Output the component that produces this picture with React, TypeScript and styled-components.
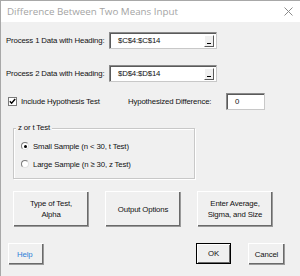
import React, { ReactElement, ReactNode } from 'react'
import styled, { createGlobalStyle } from 'styled-components'

const GlobalStyle = createGlobalStyle`
  html, body {
    margin: 0;
    padding: 0;
    background: #f0f0f0;
  }
`

const Window = styled.div(() => ({
  width: 300,
  height: 276,
  boxSizing: 'border-box',
  borderTop: '1px solid #a8a8a8',
  borderLeft: '1px solid #a8a8a8',
  background: '#f0f0f0',
  fontFamily: '"Liberation Sans", Arial, sans-serif',
  fontSize: 7.8,
  letterSpacing: -0.15,
  color: '#111',
  overflow: 'hidden',
}))

const TitleBar = styled.div(() => ({
  height: 21,
  background: '#ffffff',
  display: 'flex',
  alignItems: 'center',
  justifyContent: 'space-between',
  padding: '0 7px 0 6px',
  fontFamily: '"Open Sans", "Liberation Sans", sans-serif',
  fontSize: 9.8,
  letterSpacing: 0,
  color: '#a4a4a4',
}))

const Body = styled.div(() => ({
  padding: '0 0 0 5px',
}))

const Row = styled.div<{ $top: number }>(({ $top }) => ({
  display: 'flex',
  alignItems: 'center',
  marginTop: $top,
}))

const Label = styled.span<{ $width?: number }>(({ $width }) => ({
  width: $width,
  whiteSpace: 'nowrap',
}))

const TextBox = styled.div<{ $width: number }>(({ $width }) => ({
  width: $width,
  height: 17,
  boxSizing: 'border-box',
  background: '#fff',
  borderTop: '1px solid #8a8a8a',
  borderLeft: '1px solid #8a8a8a',
  borderRight: '1px solid #c8c8c8',
  borderBottom: '1px solid #c8c8c8',
  boxShadow: 'inset 1px 1px 0 #5a5a5a',
  display: 'flex',
  alignItems: 'center',
  paddingLeft: 8,
  paddingRight: 2,
}))

const BoxValue = styled.span(() => ({
  flex: 1,
}))

const PickButton = styled.div(() => ({
  width: 10,
  height: 12,
  boxSizing: 'border-box',
  background: '#f0f0f0',
  borderTop: '1px solid #fff',
  borderLeft: '1px solid #fff',
  borderRight: '1px solid #5a5a5a',
  borderBottom: '1px solid #5a5a5a',
  display: 'flex',
  alignItems: 'flex-end',
  justifyContent: 'center',
  paddingBottom: 2,
  '&::after': {
    content: '""',
    width: 4,
    height: 1,
    background: '#000',
  },
}))

const CheckBox = styled.span(() => ({
  width: 9,
  height: 9,
  boxSizing: 'border-box',
  background: '#fff',
  border: '1px solid #7a7a7a',
  display: 'inline-flex',
  alignItems: 'center',
  justifyContent: 'center',
  marginLeft: 2,
  marginRight: 4,
}))

const Frame = styled.div(() => ({
  width: 182,
  height: 51,
  boxSizing: 'border-box',
  margin: '18px 0 0 7px',
  padding: '0 0 0 7px',
  border: '1px solid #c8c8c8',
  boxShadow: '1px 1px 0 #fff, inset 1px 1px 0 #fff',
  display: 'flex',
  flexDirection: 'column',
  gap: 6,
}))

const Legend = styled.div(() => ({
  alignSelf: 'flex-start',
  margin: '-6px 0 1px -5px',
  padding: '0 2px',
  background: '#f0f0f0',
  lineHeight: '10px',
}))

const RadioRow = styled.div(() => ({
  display: 'flex',
  alignItems: 'center',
  gap: 4,
  height: 12,
}))

const Radio = styled.span<{ $on?: boolean }>(({ $on }) => ({
  width: 8,
  height: 8,
  boxSizing: 'border-box',
  borderRadius: '50%',
  background: '#fff',
  border: '1px solid',
  borderColor: '#7a7a7a #e0e0e0 #e0e0e0 #7a7a7a',
  display: 'inline-flex',
  alignItems: 'center',
  justifyContent: 'center',
  '&::after': {
    content: '""',
    width: 3,
    height: 3,
    borderRadius: '50%',
    background: $on ? '#000' : 'transparent',
  },
}))

const ButtonRow = styled.div<{ $top: number }>(({ $top }) => ({
  display: 'flex',
  alignItems: 'center',
  marginTop: $top,
}))

const Button = styled.div<{ $width: number; $height: number; $left: number; $default?: boolean; $link?: boolean }>(
  ({ $width, $height, $left, $default, $link }) => ({
    width: $width,
    height: $height,
    marginLeft: $left,
    boxSizing: 'border-box',
    background: '#f0f0f0',
    border: $default ? '1px solid #000' : 'none',
    borderTop: $default ? '1px solid #000' : '1px solid #fff',
    borderLeft: $default ? '1px solid #000' : '1px solid #fff',
    boxShadow: $default
      ? 'inset 1px 1px 0 #fff, inset -1px -1px 0 #6a6a6a'
      : 'inset -1px -1px 0 #6a6a6a, 1px 1px 0 #9a9a9a',
    display: 'flex',
    alignItems: 'center',
    justifyContent: $link ? 'flex-start' : 'center',
    paddingLeft: $link ? 8 : 0,
    textAlign: 'center',
    lineHeight: '11px',
    color: $link ? '#2f7fd8' : '#111',
  }),
)

const Close = (): ReactElement => (
  <svg width="9" height="9" viewBox="0 0 9 9">
    <path d="M0.5 0.5 L8.5 8.5 M8.5 0.5 L0.5 8.5" stroke="#8a8a8a" strokeWidth="1" />
  </svg>
)

const Check = (): ReactElement => (
  <svg width="7" height="7" viewBox="0 0 7 7">
    <path d="M0.8 3.2 L2.6 5.2 L6.2 1" stroke="#000" strokeWidth="1.4" fill="none" />
  </svg>
)

const RefEdit = ({ children }: { children: ReactNode }): ReactElement => (
  <TextBox $width={108}>
    <BoxValue>{children}</BoxValue>
    <PickButton />
  </TextBox>
)

export default function App(): ReactElement {
  return (
    <>
      <GlobalStyle />
      <Window>
        <TitleBar>
          <span>Difference Between Two Means Input</span>
          <Close />
        </TitleBar>
        <Body>
          <Row $top={10}>
            <Label $width={103}>Process 1 Data with Heading:</Label>
            <RefEdit>$C$4:$C$14</RefEdit>
          </Row>
          <Row $top={16}>
            <Label $width={103}>Process 2 Data with Heading:</Label>
            <RefEdit>$D$4:$D$14</RefEdit>
          </Row>
          <Row $top={11}>
            <CheckBox>
              <Check />
            </CheckBox>
            <Label $width={107}>Include Hypothesis Test</Label>
            <Label $width={98}>Hypothesized Difference:</Label>
            <TextBox $width={39}>0</TextBox>
          </Row>
          <Frame>
            <Legend>z or t Test</Legend>
            <RadioRow>
              <Radio $on />
              <span>Small Sample (n &lt; 30, t Test)</span>
            </RadioRow>
            <RadioRow>
              <Radio />
              <span>Large Sample (n ≥ 30, z Test)</span>
            </RadioRow>
          </Frame>
          <ButtonRow $top={12}>
            <Button $width={75} $height={35} $left={7}>
              Type of Test,
              <br />
              Alpha
            </Button>
            <Button $width={75} $height={35} $left={17}>
              Output Options
            </Button>
            <Button $width={75} $height={35} $left={17}>
              Enter Average,
              <br />
              Sigma, and Size
            </Button>
          </ButtonRow>
          <ButtonRow $top={17}>
            <Button $width={35} $height={21} $left={2} $link>
              Help
            </Button>
            <Button $width={35} $height={21} $left={153} $default>
              OK
            </Button>
            <Button $width={36} $height={21} $left={17}>
              Cancel
            </Button>
          </ButtonRow>
        </Body>
      </Window>
    </>
  )
}
